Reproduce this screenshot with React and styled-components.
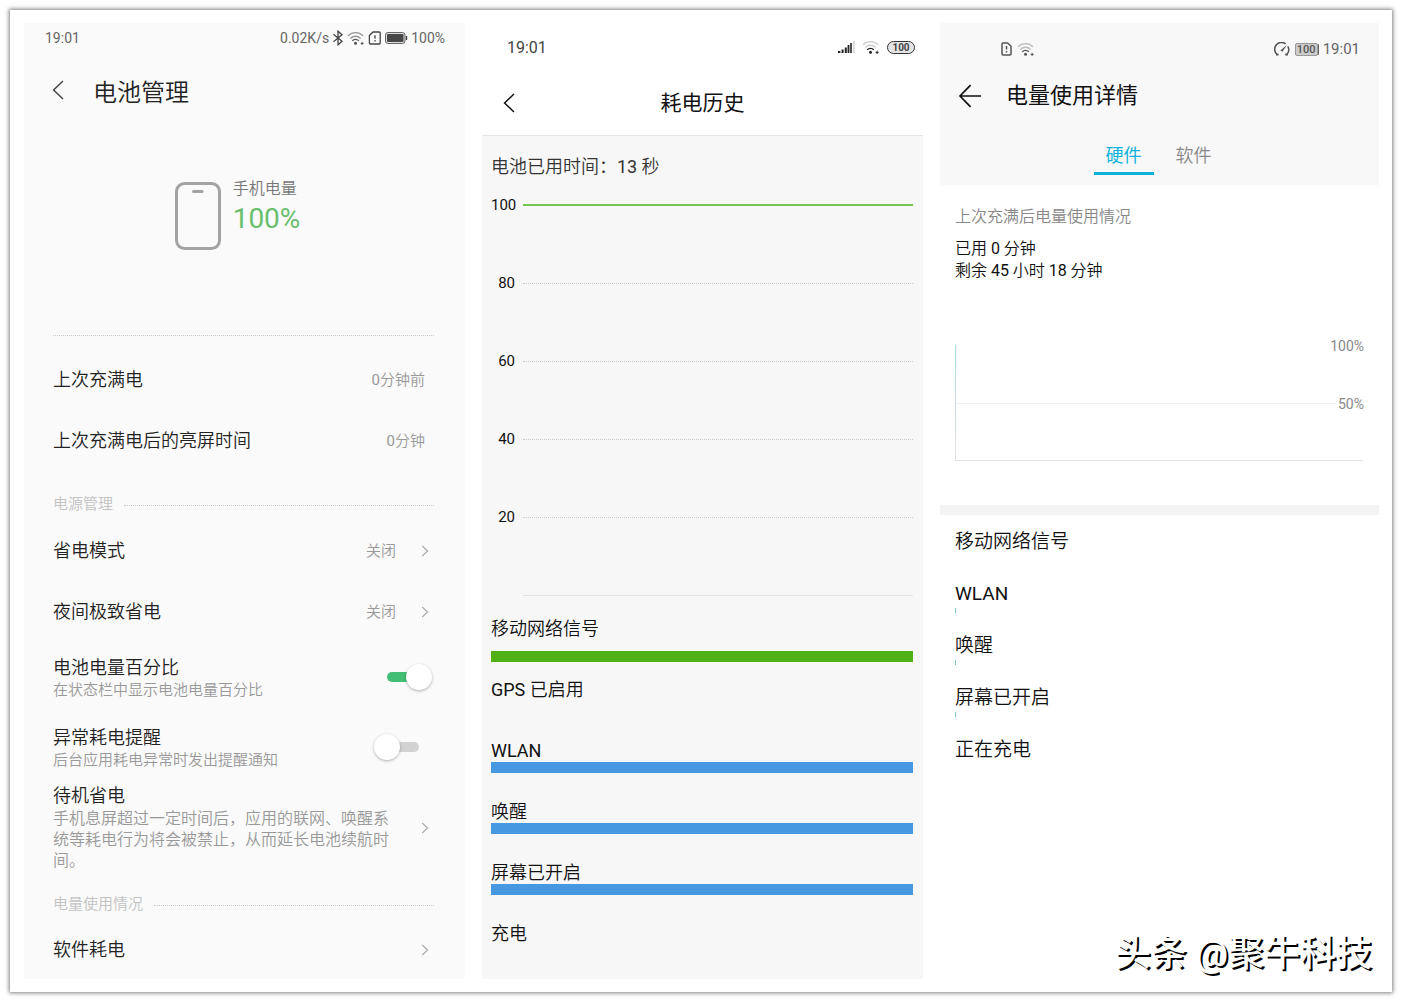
import { useState } from "react";
import styled, { createGlobalStyle } from "styled-components";

const powerRows = [
  { title: "省电模式", value: "关闭" },
  { title: "夜间极致省电", value: "关闭" },
];

const levels = [
  { label: "100", kind: "full" },
  { label: "80", kind: "grid" },
  { label: "60", kind: "grid" },
  { label: "40", kind: "grid" },
  { label: "20", kind: "grid" },
  { label: "", kind: "base" },
];

const history = [
  { name: "移动网络信号", color: "#50b117", spaced: true },
  { latin: "GPS", name: " 已启用" },
  { latin: "WLAN", color: "#4698e0" },
  { name: "唤醒", color: "#4698e0" },
  { name: "屏幕已开启", color: "#4698e0" },
  { name: "充电" },
];

const hardware = [
  { name: "移动网络信号" },
  { latin: "WLAN", used: true },
  { name: "唤醒", used: true },
  { name: "屏幕已开启", used: true },
  { name: "正在充电" },
];

function App() {
  return (
    <>
      <GlobalStyle />
      <Sheet>
        <BatteryManager />
        <PowerHistory />
        <UsageDetails />
        <Watermark>头条 @聚牛科技</Watermark>
      </Sheet>
    </>
  );
}

function BatteryManager() {
  const [percent, setPercent] = useState(true);
  const [alert, setAlert] = useState(false);

  return (
    <Manager>
      <ManagerStatus>
        <span>19:01</span>
        <StatusIcons $gap="3px">
          <span>0.02K/s</span>
          <BluetoothIcon />
          <WifiIcon color="#555" faded="#999" />
          <SimIcon />
          <BatteryIcon />
          <span>100%</span>
        </StatusIcons>
      </ManagerStatus>
      <ManagerHeader>
        <IconButton aria-label="返回">
          <BackIcon color="#444" />
        </IconButton>
        <h1>电池管理</h1>
      </ManagerHeader>
      <Hero>
        <PhoneIcon />
        <div>
          <HeroLabel>手机电量</HeroLabel>
          <HeroValue>100%</HeroValue>
        </div>
      </Hero>
      <Divider />
      <Row>
        <RowTitle>上次充满电</RowTitle>
        <RowValue>
          <Latin>0</Latin>分钟前
        </RowValue>
      </Row>
      <Row>
        <RowTitle>上次充满电后的亮屏时间</RowTitle>
        <RowValue>
          <Latin>0</Latin>分钟
        </RowValue>
      </Row>
      <SectionTitle>电源管理</SectionTitle>
      {powerRows.map((row) => (
        <LinkRow key={row.title}>
          <RowTitle>{row.title}</RowTitle>
          <RowValue>{row.value}</RowValue>
          <ArrowIcon />
        </LinkRow>
      ))}
      <ToggleRow>
        <RowText>
          <RowTitle>电池电量百分比</RowTitle>
          <RowNote>在状态栏中显示电池电量百分比</RowNote>
        </RowText>
        <Toggle
          type="checkbox"
          checked={percent}
          onChange={() => setPercent(!percent)}
        />
      </ToggleRow>
      <ToggleRow>
        <RowText>
          <RowTitle>异常耗电提醒</RowTitle>
          <RowNote>后台应用耗电异常时发出提醒通知</RowNote>
        </RowText>
        <Toggle
          type="checkbox"
          checked={alert}
          onChange={() => setAlert(!alert)}
        />
      </ToggleRow>
      <NoteRow>
        <span>
          <RowTitle>待机省电</RowTitle>
          <LongNote>
            手机息屏超过一定时间后，应用的联网、唤醒系统等耗电行为将会被禁止，从而延长电池续航时间。
          </LongNote>
        </span>
        <ArrowIcon />
      </NoteRow>
      <SectionTitle>电量使用情况</SectionTitle>
      <LinkRow>
        <RowTitle>软件耗电</RowTitle>
        <ArrowIcon />
      </LinkRow>
    </Manager>
  );
}

function PowerHistory() {
  return (
    <History>
      <HistoryStatus>
        <span>19:01</span>
        <StatusIcons $gap="7px">
          <SignalIcon />
          <WifiIcon color="#222" faded="#ccc" />
          <BatteryPill>100</BatteryPill>
        </StatusIcons>
      </HistoryStatus>
      <HistoryHeader>
        <IconButton aria-label="返回">
          <BackIcon color="#111" />
        </IconButton>
        <h1>耗电历史</h1>
      </HistoryHeader>
      <HistoryBody>
        <Elapsed>
          电池已用时间：<Latin>13</Latin> 秒
        </Elapsed>
        <Levels>
          {levels.map((level) => (
            <Level key={level.kind + level.label}>
              <LevelLabel>{level.label}</LevelLabel>
              <LevelLine $kind={level.kind} />
            </Level>
          ))}
        </Levels>
        {history.map((item) => (
          <HistoryItem key={item.latin || item.name} $spaced={item.spaced}>
            <span>
              <Latin>{item.latin}</Latin>
              {item.name}
            </span>
            {item.color && <Bar $color={item.color} />}
          </HistoryItem>
        ))}
      </HistoryBody>
    </History>
  );
}

function UsageDetails() {
  const [tab, setTab] = useState("hardware");

  return (
    <Details>
      <DetailsTop>
        <DetailsStatus>
          <StatusIcons $gap="5px">
            <NoSimIcon />
            <WifiIcon color="#555" faded="#bbb" />
          </StatusIcons>
          <StatusIcons $gap="5px">
            <GaugeIcon />
            <BatteryBox>100</BatteryBox>
            <span>19:01</span>
          </StatusIcons>
        </DetailsStatus>
        <DetailsHeader>
          <IconButton aria-label="返回">
            <LongArrowIcon />
          </IconButton>
          <h1>电量使用详情</h1>
        </DetailsHeader>
        <Tabs>
          <Tab $active={tab === "hardware"} onClick={() => setTab("hardware")}>
            硬件
          </Tab>
          <Tab $active={tab === "software"} onClick={() => setTab("software")}>
            软件
          </Tab>
        </Tabs>
      </DetailsTop>
      <Summary>
        <SummaryTitle>上次充满后电量使用情况</SummaryTitle>
        <p>
          已用 <Latin>0</Latin> 分钟
        </p>
        <p>
          剩余 <Latin>45</Latin> 小时 <Latin>18</Latin> 分钟
        </p>
      </Summary>
      <UsageChart>
        <UsageLevel>
          <span>100%</span>
        </UsageLevel>
        <UsageLevel $line>
          <span>50%</span>
        </UsageLevel>
      </UsageChart>
      <HardwareList>
        {hardware.map((item) => (
          <HardwareItem key={item.latin || item.name} $used={item.used}>
            <Latin>{item.latin}</Latin>
            {item.name}
          </HardwareItem>
        ))}
      </HardwareList>
    </Details>
  );
}

const BluetoothIcon = () => (
  <svg width="12" height="16" viewBox="0 0 12 16" fill="none" stroke="#444" strokeWidth="1.3">
    <path d="M1.5 4.2 10 11.2 6 14.8V1.2L10 4.8 1.5 11.8" />
  </svg>
);

const WifiIcon = ({ color, faded }) => (
  <svg width="18" height="15" viewBox="0 0 18 15" fill="none" strokeWidth="1.4">
    <path d="M1 4.8a10.5 10.5 0 0 1 15 0" stroke={faded} />
    <path d="M3.4 7.4a7.2 7.2 0 0 1 10.2 0" stroke={faded} />
    <path d="M5.2 9.8a4.6 4.6 0 0 1 6.6 0" stroke={color} />
    <circle cx="8.5" cy="12.3" r="1.5" fill={color} />
    <path d="M13.6 12.4h3M15.1 10.8v3.2" stroke={color} strokeWidth="1" />
  </svg>
);

const SimIcon = () => (
  <svg width="14" height="14" viewBox="0 0 14 14" fill="none" stroke="#444" strokeWidth="1.3">
    <path d="M5 1h6.2a1 1 0 0 1 1 1v10a1 1 0 0 1-1 1H2.4a1 1 0 0 1-1-1V4.6z" />
    <path d="M7 4.2v3.6M7 9v1.4" />
  </svg>
);

const NoSimIcon = () => (
  <svg width="11" height="14" viewBox="0 0 11 14" fill="none" stroke="#555" strokeWidth="1.5">
    <path d="M2 1h4.6L10 4.2V12a1 1 0 0 1-1 1H2a1 1 0 0 1-1-1V2a1 1 0 0 1 1-1z" />
    <path d="M5.5 4v3.6M5.5 9v1.6" />
  </svg>
);

const BatteryIcon = () => (
  <svg width="23" height="12" viewBox="0 0 23 12">
    <rect x="0.5" y="0.5" width="19.5" height="11" rx="2.5" fill="#ddd" stroke="#666" />
    <rect x="2" y="2" width="16.5" height="8" rx="1" fill="#484848" />
    <path d="M21.5 4v4" stroke="#444" strokeWidth="1.4" />
  </svg>
);

const SignalIcon = () => (
  <svg width="17" height="12" viewBox="0 0 17 12" fill="#222">
    <path d="M0 10h2.4v2H0zM3.6 8.4h2V12h-2zM6.8 6.4h2V12h-2zM9.6 4h1.8v8H9.6zM12.2 2h1.6v10h-1.6z" />
    <path d="M15.2 0h1.4v12h-1.4z" fill="#ccc" />
  </svg>
);

const GaugeIcon = () => (
  <svg width="16" height="14" viewBox="0 0 16 14" fill="none" stroke="#555" strokeWidth="1.6">
    <path d="M3.4 12.8A6.6 6.6 0 0 1 11.6 1.8M13.8 4.4a6.6 6.6 0 0 1-1.4 8.4" />
    <path d="M2 12.6h2.6M11.2 12.6h2.6" />
    <path d="M13 2.8 8.4 9.8 6.4 8.4z" fill="#555" stroke="none" />
  </svg>
);

const BackIcon = ({ color }) => (
  <svg width="12" height="20" viewBox="0 0 12 20" fill="none" stroke={color} strokeWidth="1.5">
    <path d="M11 1 1.6 10 11 19" />
  </svg>
);

const LongArrowIcon = () => (
  <svg width="24" height="24" viewBox="0 0 24 24" fill="none" stroke="#111" strokeWidth="1.7">
    <path d="M23 12H2M12.6 1.2 2 12l10.6 10.8" />
  </svg>
);

const ArrowIcon = () => (
  <svg width="8" height="12" viewBox="0 0 8 12" fill="none" stroke="#aaa" strokeWidth="1.2">
    <path d="M1.2 1 6.6 6 1.2 11" />
  </svg>
);

const PhoneIcon = () => (
  <svg width="46" height="68" viewBox="0 0 46 68" fill="none" stroke="#a3a3a3">
    <rect x="1.5" y="1.5" width="43" height="65" rx="8" strokeWidth="3" />
    <path d="M18.5 9.5h8.5" strokeWidth="3" strokeLinecap="round" />
  </svg>
);

const GlobalStyle = createGlobalStyle`
  * {
    box-sizing: border-box;
  }
  body {
    margin: 0;
    padding: 10px;
    background: #fff;
    color: #111;
    font-family: Roboto, "Noto Sans CJK SC", sans-serif;
    font-weight: 350;
  }
  h1, h2, p {
    margin: 0;
    font-weight: inherit;
  }
  button {
    padding: 0;
    border: 0;
    background: none;
    color: inherit;
    font: inherit;
    text-align: left;
  }
  svg {
    display: block;
    flex-shrink: 0;
  }
`;

const Sheet = styled.main`
  position: relative;
  display: grid;
  grid-template-columns: 441fr 441fr 439fr;
  gap: 17px;
  min-height: calc(100vh - 20px);
  padding: 13px 13px 13px 14px;
  background: #fff;
  box-shadow: 0 0 4px 1px rgba(0, 0, 0, 0.5);
`;

const Latin = styled.span`
  font-weight: 400;
`;

const StatusBar = styled.div`
  display: flex;
  align-items: center;
  justify-content: space-between;
  font-weight: 400;
`;

const StatusIcons = styled.div`
  display: flex;
  align-items: center;
  gap: ${(props) => props.$gap};
`;

const IconButton = styled.button`
  display: flex;
  cursor: pointer;
`;

const Manager = styled.section`
  display: flex;
  flex-direction: column;
  background: #fafafa;
  color: #222;
`;

const ManagerStatus = styled(StatusBar)`
  height: 30px;
  padding: 0 20px 0 21px;
  color: #666;
  font-size: 14px;
`;

const ManagerHeader = styled.header`
  display: flex;
  align-items: center;
  gap: 29px;
  height: 74px;
  padding-left: 28px;

  h1 {
    font-size: 24px;
  }
`;

const Hero = styled.div`
  display: flex;
  justify-content: center;
  gap: 12px;
  height: 208px;
  padding: 55px 14px 0 0;
`;

const HeroLabel = styled.p`
  color: #777;
  font-size: 16px;
  line-height: 14px;
`;

const HeroValue = styled.p`
  margin-top: 6px;
  color: #69bf6d;
  font-size: 28px;
  font-weight: 400;
  line-height: 34px;
`;

const Divider = styled.hr`
  width: calc(100% - 60px);
  margin: 0 31px 13px 29px;
  border: 0;
  border-top: 1px dotted #ccc;
`;

const Row = styled.div`
  display: flex;
  align-items: center;
  justify-content: space-between;
  width: 100%;
  height: 61px;
  padding: 0 40px 0 29px;
`;

const LinkRow = styled(Row).attrs({ as: "button" })`
  gap: 25px;
  padding-right: 36px;
  cursor: pointer;

  &:last-child {
    height: 59px;
  }
`;

const ToggleRow = styled(Row).attrs({ as: "label" })`
  height: 70px;
  padding-right: 33px;
`;

const NoteRow = styled(LinkRow)`
  gap: 31px;
  height: auto;
  padding-top: 2px;
`;

const RowText = styled.span`
  padding-top: 3px;
`;

const RowTitle = styled.span`
  display: block;
  flex: 1;
  font-size: 18px;
  line-height: 24px;
`;

const RowValue = styled.span`
  color: #999;
  font-size: 15px;
  line-height: 24px;
`;

const RowNote = styled.span`
  display: block;
  color: #999;
  font-size: 15px;
  line-height: 21px;
`;

const LongNote = styled(RowNote)`
  font-size: 16px;
`;

const SectionTitle = styled.h2`
  display: flex;
  align-items: center;
  gap: 11px;
  height: 49px;
  padding: 16px 31px 0 29px;
  color: #c2c2c2;
  font-size: 15px;
  line-height: 20px;

  &::after {
    content: "";
    flex: 1;
    margin-top: 4px;
    border-top: 1px dotted #ccc;
  }
`;

const Toggle = styled.input`
  appearance: none;
  display: flex;
  align-items: center;
  width: 58px;
  height: 26px;
  margin: 0;
  padding: 8px 13px;
  border-radius: 18px / 13px;
  background: linear-gradient(
    ${(props) => (props.checked ? "#42bf75" : "#d2d2d2")} 0 0
  );
  background-clip: content-box;
  cursor: pointer;

  &::before {
    content: "";
    flex-shrink: 0;
    width: 26px;
    height: 26px;
    margin: 0 ${(props) => (props.checked ? "-13px 0 19px" : "0 0 -13px")};
    border-radius: 50%;
    background: #fff;
    box-shadow: 0 1px 3px rgba(0, 0, 0, 0.3);
  }
`;

const History = styled.section`
  display: flex;
  flex-direction: column;
`;

const HistoryStatus = styled(StatusBar)`
  height: 48px;
  padding: 0 8px 0 25px;
  color: #444;
  font-size: 16px;
`;

const BatteryPill = styled.span`
  width: 28px;
  border: 1px solid #333;
  border-radius: 7px;
  background: #e4e4e4;
  font-size: 10px;
  font-weight: 700;
  line-height: 11px;
  text-align: center;
`;

const HistoryHeader = styled.header`
  display: grid;
  grid-template-columns: 12px 1fr 12px;
  align-items: center;
  height: 65px;
  padding: 0 21px;
  border-bottom: 1px solid #e4e4e4;

  h1 {
    font-size: 21px;
    font-weight: 400;
    line-height: 26px;
    text-align: center;
  }
`;

const HistoryBody = styled.div`
  flex: 1;
  padding: 20px 10px 0 9px;
  background: #f7f7f7;
`;

const Elapsed = styled.p`
  color: #333;
  font-size: 18px;
  line-height: 22px;
`;

const Levels = styled.ul`
  display: grid;
  gap: 60px;
  margin: 0;
  padding: 18px 0 14px;
  list-style: none;
`;

const Level = styled.li`
  display: flex;
  align-items: center;
  gap: 8px;
  height: 18px;
`;

const LevelLabel = styled.span`
  width: 24px;
  font-size: 15px;
  font-weight: 400;
  text-align: right;
`;

const lineStyles = {
  full: "2px solid #78c651",
  grid: "1px dotted #ccc",
  base: "1px solid #e2e2e2",
};

const LevelLine = styled.span`
  flex: 1;
  border-top: ${(props) => lineStyles[props.$kind]};
`;

const HistoryItem = styled.div`
  display: flex;
  flex-direction: column;
  gap: ${(props) => (props.$spaced ? "11px" : "0")};
  height: 61px;
  font-size: 18px;
  line-height: 22px;

  &:last-child {
    height: 52px;
  }
`;

const Bar = styled.div`
  height: 11px;
  background: ${(props) => props.$color};
`;

const Details = styled.section`
  color: #111;
`;

const DetailsTop = styled.div`
  height: 162px;
  background: #f8f8f8;
`;

const DetailsStatus = styled(StatusBar)`
  height: 52px;
  padding: 0 19px 0 61px;
  color: #666;
  font-size: 15px;
`;

const BatteryBox = styled.span`
  width: 23px;
  border: 1px solid #999;
  border-radius: 2px;
  background: #ccc;
  box-shadow: 2px 0 0 -1px #666;
  color: #555;
  font-size: 11px;
  font-weight: 500;
  line-height: 11px;
  text-align: center;
`;

const DetailsHeader = styled.header`
  display: flex;
  align-items: center;
  gap: 24px;
  height: 42px;
  padding-left: 18px;

  h1 {
    font-size: 22px;
    font-weight: 400;
    line-height: 28px;
  }
`;

const Tabs = styled.div`
  display: flex;
  justify-content: center;
  gap: 10px;
  padding: 19px 2px 0 0;
`;

const Tab = styled.button`
  height: 39px;
  padding: 0 12px;
  border-bottom: 3px solid ${(props) => (props.$active ? "#0db2dc" : "transparent")};
  color: ${(props) => (props.$active ? "#0db2dc" : "#888")};
  font-size: 18px;
  font-weight: ${(props) => (props.$active ? 400 : 350)};
  cursor: pointer;
`;

const Summary = styled.div`
  padding: 21px 15px 0;
  font-size: 16px;
  line-height: 22px;
`;

const SummaryTitle = styled.h2`
  margin-bottom: 10px;
  color: #888;
  font-size: 16px;
`;

const UsageChart = styled.div`
  margin: 63px 16px 44px 15px;
  border-left: 1px solid;
  border-bottom: 1px solid #ddd;
  border-image: linear-gradient(#a9dbe4, #e2e2e2 90%) 1;
`;

const UsageLevel = styled.div`
  display: flex;
  align-items: flex-start;
  gap: 2px;
  height: 58px;
  color: #888;
  font-size: 14px;
  font-weight: 400;
  line-height: 16px;

  &:last-child {
    height: 57px;
  }
  &::before {
    content: "";
    flex: 1;
    border-top: 1px solid ${(props) => (props.$line ? "#f0f0f0" : "transparent")};
  }
  span {
    margin: -7px -1px 0 0;
  }
`;

const HardwareList = styled.ul`
  margin: 0;
  padding: 0;
  border-top: 10px solid #f3f3f3;
  list-style: none;
`;

const HardwareItem = styled.li`
  height: 52px;
  padding: 15px 15px 0;
  font-size: 19px;
  line-height: 24px;

  &::after {
    content: "";
    display: ${(props) => (props.$used ? "block" : "none")};
    width: 1px;
    height: 5px;
    margin-top: 2px;
    background: #7fc4cf;
  }
`;

const Watermark = styled.p`
  position: absolute;
  right: 20px;
  bottom: 12px;
  color: #fff;
  font-size: 36px;
  font-weight: 500;
  line-height: 52px;
  text-shadow: 2px 2px 0 #000;
`;

export default App;
